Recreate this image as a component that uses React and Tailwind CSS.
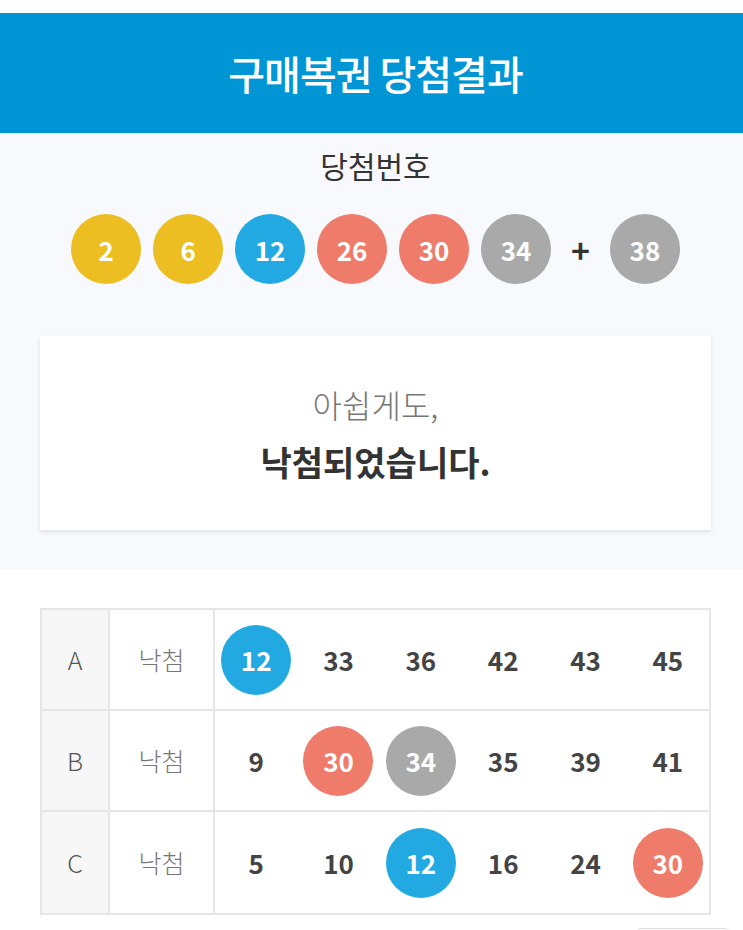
import React from "react";

const FONT = { fontFamily: '"Noto Sans CJK KR", "Noto Sans", sans-serif' };

const BALL_COLORS = {
  yellow: "bg-[#ecbe22]",
  blue: "bg-[#22a9e2]",
  red: "bg-[#ef7b6a]",
  gray: "bg-[#a9a9a9]",
};

function colorFor(n) {
  if (n <= 10) return "yellow";
  if (n <= 20) return "blue";
  if (n <= 30) return "red";
  return "gray";
}

function Ball({ n }) {
  return (
    <div
      className={`flex h-[70px] w-[70px] items-center justify-center rounded-full text-[26px] font-bold text-white ${BALL_COLORS[colorFor(n)]}`}
    >
      {n}
    </div>
  );
}

const winning = [2, 6, 12, 26, 30, 34];
const bonus = 38;

const games = [
  { label: "A", nums: [12, 33, 36, 42, 43, 45] },
  { label: "B", nums: [9, 30, 34, 35, 39, 41] },
  { label: "C", nums: [5, 10, 12, 16, 24, 30] },
];

function GameRow({ game, last }) {
  return (
    <div
      className={`flex h-[101px] ${last ? "" : "border-b-2 border-[#e6e6e6]"}`}
    >
      <div className="flex w-[68px] items-center justify-center border-r-2 border-[#e6e6e6] bg-[#f7f7f7] text-[25px] font-light text-[#555]">
        {game.label}
      </div>
      <div className="flex w-[105px] items-center justify-center border-r-2 border-[#e6e6e6] text-[25px] font-light text-[#777]">
        낙첨
      </div>
      <div className="grid flex-1 grid-cols-6 items-center">
        {game.nums.map((n, i) => (
          <div key={i} className="flex justify-center">
            {winning.includes(n) ? (
              <Ball n={n} />
            ) : (
              <span className="text-[26px] font-bold text-[#444]">{n}</span>
            )}
          </div>
        ))}
      </div>
    </div>
  );
}

export default function App() {
  return (
    <div className="min-h-[930px] w-[751px] overflow-hidden bg-white" style={FONT}>
      <div className="h-[13px]" />
      <header className="flex h-[120px] items-center justify-center bg-[#0095d5]">
        <h1 className="text-[40px] font-medium tracking-tight text-white">
          구매복권 당첨결과
        </h1>
      </header>

      <section className="flex flex-col items-center bg-[#f8f9fd] pb-[39px] pt-[12px]">
        <h2 className="text-[30px] font-normal leading-[40px] text-[#333]">
          당첨번호
        </h2>
        <div className="mt-[29px] flex items-center gap-3">
          {winning.map((n) => (
            <Ball key={n} n={n} />
          ))}
          <span className="mx-[8px] text-[32px] font-bold leading-none text-[#333]">
            +
          </span>
          <Ball n={bonus} />
        </div>
        <div className="mt-[52px] flex h-[194px] w-[671px] flex-col items-center justify-center bg-white shadow-[0_2px_4px_rgba(0,0,0,0.1)]">
          <p className="text-[32px] font-light leading-[44px] text-[#777]">
            아쉽게도,
          </p>
          <p className="mt-[14px] text-[34px] font-bold leading-[44px] text-[#333]">
            낙첨되었습니다.
          </p>
        </div>
      </section>

      <div className="px-[40px] pt-[39px]">
        <div className="w-[671px] border-2 border-[#e6e6e6]">
          {games.map((g, i) => (
            <GameRow key={g.label} game={g} last={i === games.length - 1} />
          ))}
        </div>
      </div>

      <div className="flex justify-end pr-[22px] pt-[13px]">
        <div className="h-[30px] w-[92px] rounded-sm border border-[#dddddd]" />
      </div>
    </div>
  );
}
